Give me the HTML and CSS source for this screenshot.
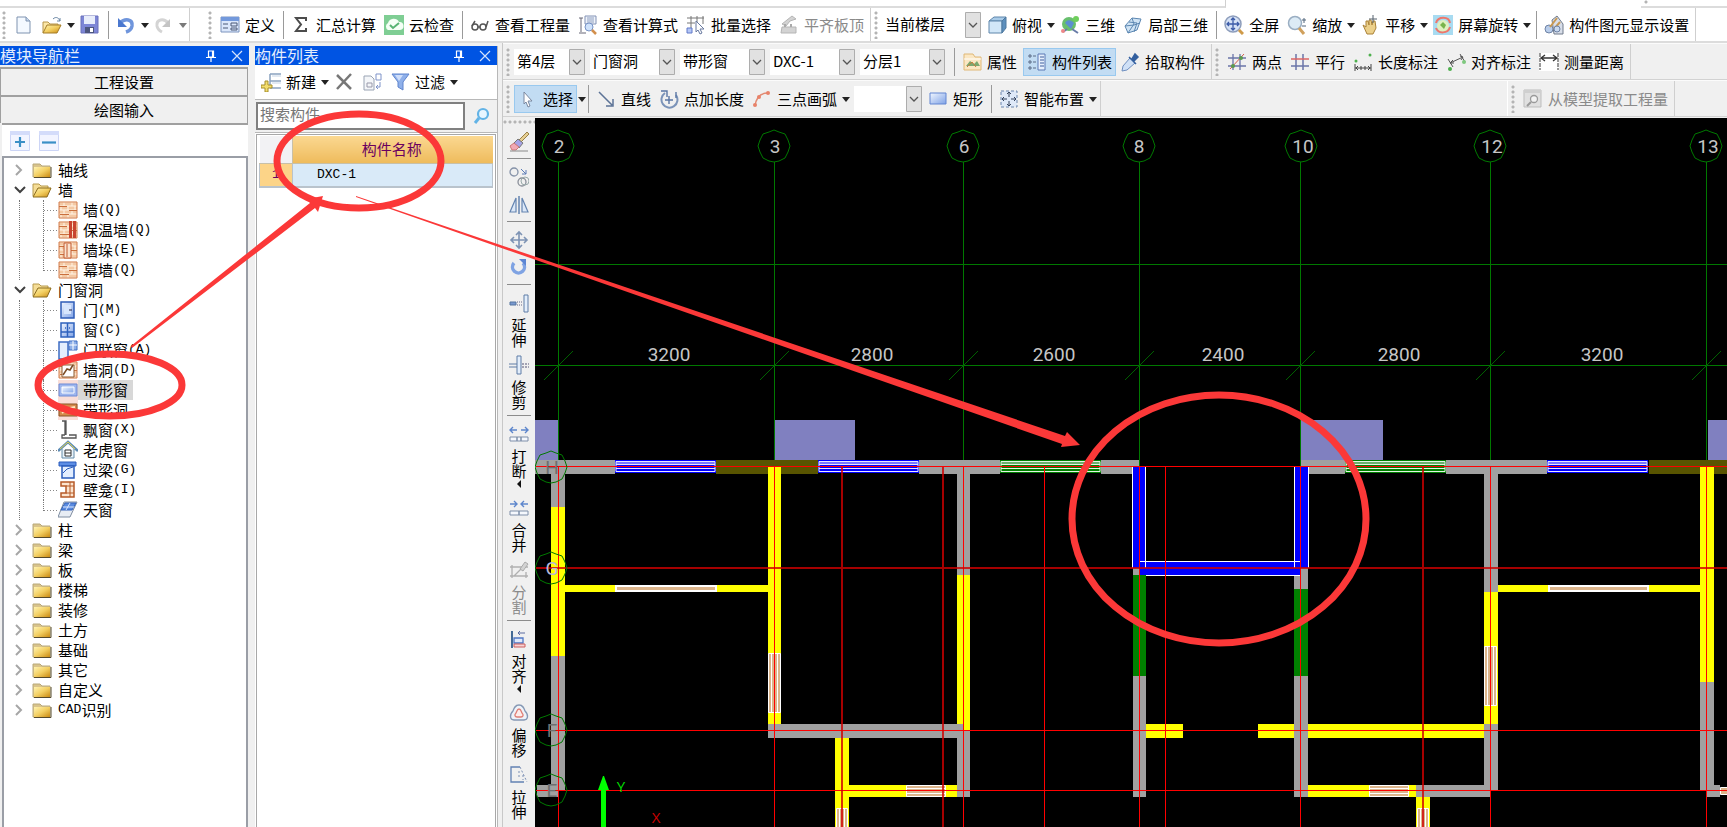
FILE: index.html
```html
<!DOCTYPE html>
<html lang="zh-CN">
<head>
<meta charset="utf-8">
<title>绘图输入</title>
<link rel="stylesheet" href="styles.css">
</head>
<body>
<svg class="sprite" aria-hidden="true">
  <defs>
    <linearGradient id="gold" x1="0" y1="0" x2="1" y2="1"><stop offset="0" stop-color="#fff3b0"/><stop offset=".5" stop-color="#f3cf62"/><stop offset="1" stop-color="#c98a12"/></linearGradient>
    <linearGradient id="sky" x1="0" y1="0" x2="1" y2="1"><stop offset="0" stop-color="#f2f7ff"/><stop offset="1" stop-color="#7fa2e6"/></linearGradient>
    <symbol id="folder" viewBox="0 0 20 20"><path d="M1 4h7l2 2h8v11H1z" fill="#d9c48c" stroke="#b9a97a"/><path d="M2 7h16v10H2z" fill="url(#gold)"/><path d="M2 17.500h17V7" fill="none" stroke="#554a2c"/></symbol>
    <symbol id="folder-open" viewBox="0 0 20 20"><path d="M1 16V4h6l2 2h7v4" fill="#f5dd96" stroke="#b79a4d"/><path d="M1 17l5-9h13l-4 9z" fill="url(#gold)" stroke="#8a6a1c"/></symbol>
    <symbol id="brick" viewBox="0 0 20 20"><path d="M1 2h18v16H1z" fill="#f4c9a4"/><path d="M1 2h18M1 6h18M1 10h18M1 14h18M1 18h18M6 2v4M14 2v4M3 6v4M10 6v4M17 6v4M6 10v4M14 10v4M3 14v4M10 14v4" stroke="#fff4e6"/><path d="M1 2h18v16H1z" fill="none" stroke="#d27d4c"/><path d="M1 6.500h8M11 10.500h8M2 14.500h9" stroke="#c96f3d"/></symbol>
    <symbol id="right" viewBox="0 0 10 12"><path d="M2 1l5 5-5 5" fill="none" stroke="#a6a6a6" stroke-width="2"/></symbol>
    <symbol id="down" viewBox="0 0 12 10"><path d="M1 2l5 5 5-5" fill="none" stroke="#404040" stroke-width="2"/></symbol>
    <symbol id="chev" viewBox="0 0 16 26"><path d="M.5.500h15v25H.5z" fill="#e1e1e1" stroke="#adadad"/><path d="M4 11l4 4 4-4" fill="none" stroke="#555" stroke-width="1.300"/></symbol>
    <symbol id="tri" viewBox="0 0 10 10"><path d="M1 3h8L5 8z" fill="#222"/></symbol>
    <symbol id="lefttri" viewBox="0 0 10 10"><path d="M7 1v8L3 5z" fill="#111"/></symbol>
    <symbol id="pin" viewBox="0 0 12 14"><path d="M3.500 2h5v6h-5zM1 8.500h10M6 9v4M7.500 2v6" fill="none" stroke="#fff" stroke-width="1.200"/></symbol>
    <symbol id="close" viewBox="0 0 12 12"><path d="M1 1l10 10M11 1L1 11" stroke="#d5e2fb" stroke-width="1.200"/></symbol>
  </defs>
</svg>

<div class="topstrip"><div class="strip-a"></div><div class="strip-b"><i class="grip"></i></div></div>

<header class="mainbar">
  <div class="toolbar">
    <i class="grip"></i>
    <button class="tool" aria-label="新建文件"><svg class="ic" viewBox="0 0 20 20"><path d="M3 2h9l4 4v12H3z" fill="#f4f9ff" stroke="#7f93b0"/><path d="M12 2v4h4" fill="#c7d7ec" stroke="#7f93b0"/></svg></button>
    <button class="tool" aria-label="打开"><svg class="ic" viewBox="0 0 20 20"><path d="M1 18V7h5l2 2h8v3" fill="#fbe7a8" stroke="#b79548"/><path d="M1 18l4-8h14l-4 8z" fill="url(#gold)" stroke="#a47d28"/><path d="M11 4c3-3 6-1 7 2m-3 0h3V3" fill="none" stroke="#6b87a5"/></svg></button>
    <button class="drop" aria-label="打开选项"><svg viewBox="0 0 10 10"><use href="#tri"/></svg></button>
    <button class="tool" aria-label="保存"><svg class="ic" viewBox="0 0 20 20"><path d="M1 1h17v17H1z" fill="#7d86d6" stroke="#6a70bb"/><path d="M4 1h11v8H4z" fill="#e8edfb"/><path d="M5 12h9v6H5z" fill="#4d567f"/><path d="M10 13h3v4h-3z" fill="#fff"/></svg></button>
    <i class="sep"></i>
    <button class="tool" aria-label="撤销"><svg class="ic" viewBox="0 0 20 20"><path d="M4 8c5-5 13-4 12 3-.5 3-3 5-6 6" fill="none" stroke="#6f95dc" stroke-width="3.500"/><path d="M2 3v9h9z" fill="#4b78cf"/></svg></button>
    <button class="drop" aria-label="撤销选项"><svg viewBox="0 0 10 10"><use href="#tri"/></svg></button>
    <button class="tool" aria-label="重做"><svg class="ic" viewBox="0 0 20 20"><path d="M14 8C10 3 2 4 3 11c.5 3 3 5 5 6" fill="none" stroke="#d4d4d4" stroke-width="3"/><path d="M16 4v8H8z" fill="#c4c4c4"/></svg></button>
    <button class="drop dim" aria-label="重做选项"><svg viewBox="0 0 10 10"><use href="#tri"/></svg></button>
  </div>
  <div class="toolbar spaced">
    <i class="grip"></i>
    <button class="tool"><svg class="ic" viewBox="0 0 20 20"><path d="M1 2h18v15H1z" fill="#dbe7fb" stroke="#7d94be"/><path d="M1 2h18v4H1z" fill="#7399dc"/><path d="M3 9h5M3 13h5M11 8h6v3h-6zM11 13h6v2h-6z" fill="none" stroke="#4a5876"/></svg>定义</button>
    <i class="sep"></i>
    <button class="tool"><svg class="ic" viewBox="0 0 20 20"><path d="M15 6V3H5l5 6.500L5 16h10v-3" fill="none" stroke="#4c4c4c" stroke-width="2"/></svg>汇总计算</button>
    <button class="tool"><svg class="ic" viewBox="0 0 20 20"><path d="M0 0h20v20H0z" fill="#7fce94"/><path d="M4 15a4 4 0 010-7 6 6 0 0111-1 4 4 0 011 8z" fill="#f4fff6"/><path d="M6 10l3 3 6-5" fill="none" stroke="#57b473" stroke-width="2"/></svg>云检查</button>
    <i class="sep"></i>
    <button class="tool"><svg class="ic" viewBox="0 0 20 20"><circle cx="5" cy="12" r="3" fill="none" stroke="#555" stroke-width="1.500"/><circle cx="13" cy="12" r="3" fill="none" stroke="#555" stroke-width="1.500"/><path d="M2 11l3-5M16 12l2-6M8 12h2" stroke="#555" stroke-width="1.500"/></svg>查看工程量</button>
    <button class="tool"><svg class="ic" viewBox="0 0 20 20"><path d="M7 1h11v8H7z" fill="#eef2fa" stroke="#8292b5"/><path d="M9 3h7M9 5h7M9 7h7" stroke="#8fa0c0"/><path d="M1 3h4M3 3v14M1 18h7" stroke="#667"/><circle cx="11" cy="12" r="4" fill="#cfe2fb" stroke="#7792c4"/><path d="M14 15l4 4" stroke="#d28f4c" stroke-width="2.500"/></svg>查看计算式</button>
    <button class="tool"><svg class="ic" viewBox="0 0 20 20"><path d="M1 3h17M1 8h8M5 1v12M11 1v7M17 1v8" stroke="#777"/><path d="M1 13h5v5H1z" fill="#b5c7f6" stroke="#6079c8"/><path d="M10 6l8 8h-4l2 4-2 1-2-4-2 2z" fill="#fff" stroke="#68799f"/></svg>批量选择</button>
    <button class="tool off"><svg class="ic" viewBox="0 0 20 20"><path d="M3 9L13 1l4 3-6 2-4 5zM3 12h14v6H2z" fill="#d3d3d3" stroke="#b5b5b5"/><path d="M6 12v-3M12 12V9" stroke="#aaa" stroke-width="2"/></svg>平齐板顶</button>
  </div>
  <div class="toolbar">
    <i class="grip"></i>
    <label class="combo c-wide"><select aria-label="楼层范围"><option>当前楼层</option></select><svg viewBox="0 0 16 26"><use href="#chev"/></svg></label>
    <button class="tool"><svg class="ic" viewBox="0 0 20 20"><path d="M2 6l5-4h12l-4 4z" fill="#a9cbe8" stroke="#5f86ab"/><path d="M2 6h13v12H2z" fill="#d2e7f8" stroke="#5f86ab"/><path d="M15 6l4-4v11l-4 5z" fill="#5d8fbd" stroke="#4e789f"/></svg>俯视</button>
    <button class="drop" aria-label="俯视选项"><svg viewBox="0 0 10 10"><use href="#tri"/></svg></button>
    <button class="tool"><svg class="ic" viewBox="0 0 20 20"><circle cx="9" cy="9" r="7" fill="#68bf6d"/><path d="M5 8c3-5 7-2 9 0l-3 6z" fill="#5b8fd0"/><path d="M3 17l4-3M12 14l6 4" stroke="#687ca8" stroke-width="2"/><circle cx="16" cy="4" r="3" fill="#6fcf5c"/><circle cx="3" cy="16" r="2" fill="#e88"/></svg>三维</button>
    <button class="tool"><svg class="ic" viewBox="0 0 20 20"><path d="M2 11L9 3l9 1-4 11-9 3z" fill="#cfe3f4" stroke="#5c87b2"/><path d="M6 7l8 1-3 9M9 3l2 6-6 9M2 11l9-1 6-2" fill="none" stroke="#5c87b2"/></svg>局部三维</button>
    <i class="sep"></i>
    <button class="tool"><svg class="ic" viewBox="0 0 20 20"><circle cx="9" cy="9" r="8" fill="#d6e2f6" stroke="#8d9dbb" stroke-width="1.500"/><path d="M9 3v12M3 9h12M7 5l2-2 2 2M7 13l2 2 2-2M5 7L3 9l2 2M13 7l2 2-2 2" fill="none" stroke="#3c5ba8" stroke-width="1.300"/><path d="M15 15l4 4" stroke="#cf9a48" stroke-width="3"/></svg>全屏</button>
    <button class="tool"><svg class="ic" viewBox="0 0 20 20"><circle cx="8" cy="8" r="6.500" fill="#dcebf6" stroke="#9aaec2" stroke-width="1.500"/><path d="M12 13l5 6" stroke="#d0a05c" stroke-width="3"/><path d="M17 3v5M15 5h4M15 11h4" stroke="#50657b"/></svg>缩放</button>
    <button class="drop" aria-label="缩放选项"><svg viewBox="0 0 10 10"><use href="#tri"/></svg></button>
    <button class="tool"><svg class="ic" viewBox="0 0 20 20"><path d="M3 10l3 2V6h2l1 4V5h2l1 5 1-4h2l1 7-3 6H7z" fill="#ecd08a" stroke="#aa8137"/><path d="M13 0v8M9 4h8" stroke="#55606c"/></svg>平移</button>
    <button class="drop" aria-label="平移选项"><svg viewBox="0 0 10 10"><use href="#tri"/></svg></button>
    <button class="tool"><svg class="ic" viewBox="0 0 20 20"><path d="M0 0h20v20H0z" fill="#a8dbf1"/><circle cx="10" cy="11" r="6" fill="#dff0c0"/><path d="M7 10l3-3 3 3-2 4z" fill="#78b44d"/><path d="M3 8c2-7 13-7 14 0M17 12c-2 7-12 7-14 1" fill="none" stroke="#ee776b" stroke-width="2"/></svg>屏幕旋转</button>
    <button class="drop" aria-label="旋转选项"><svg viewBox="0 0 10 10"><use href="#tri"/></svg></button>
    <i class="sep"></i>
    <button class="tool"><svg class="ic" viewBox="0 0 20 20"><path d="M8 5l5-4 6 8v10h-9z" fill="#d8dee9" stroke="#717b8b"/><circle cx="5" cy="14" r="4" fill="#b9cdea" stroke="#6d82a5"/><path d="M6 12l7-9M10 14l6-7" stroke="#c99952" stroke-width="2"/><circle cx="13" cy="14" r="3" fill="#c9d9ef" stroke="#6d82a5"/></svg>构件图元显示设置</button>
  </div>
</header>

<main class="work">
  <aside class="panel nav">
    <div class="title"><h2>模块导航栏</h2><button aria-label="固定"><svg width="12" height="14"><use href="#pin"/></svg></button><button aria-label="关闭"><svg width="12" height="12"><use href="#close"/></svg></button></div>
    <div class="sections"><button>工程设置</button><button>绘图输入</button></div>
    <div class="treebar">
      <button aria-label="展开"><svg viewBox="0 0 20 20"><path d="M.5.500h19v19H.5z" fill="#f2f4ff" stroke="#ccd5f6"/><path d="M0 0h20v4H0z" fill="#d4dcfa"/><path d="M10 6v10M5 11h10" stroke="#3a8fc6" stroke-width="2.200"/></svg></button>
      <button aria-label="折叠"><svg viewBox="0 0 20 20"><path d="M.5.500h19v19H.5z" fill="#f2f4ff" stroke="#ccd5f6"/><path d="M0 0h20v4H0z" fill="#d4dcfa"/><path d="M3 11.500h14" stroke="#3a8fc6" stroke-width="2.200"/></svg></button>
    </div>
    <ul class="tree">
      <li><div class="row"><svg class="tw"><use href="#right"/></svg><svg class="fo"><use href="#folder"/></svg>轴线</div></li>
      <li><div class="row"><svg class="tw open"><use href="#down"/></svg><svg class="fo"><use href="#folder-open"/></svg>墙</div>
        <ul class="kids">
          <li><svg class="ki"><use href="#brick"/></svg>墙<span class="lat">(Q)</span></li>
          <li><svg class="ki"><use href="#brick"/><path d="M11 1h3v17h-3zM15 1h3v17h-3z" fill="#c8452f"/></svg>保温墙<span class="lat">(Q)</span></li>
          <li><svg class="ki"><use href="#brick"/><path d="M6 3h7v15H6z" fill="#fbe3cf" stroke="#c25a30"/><path d="M9 4v13" stroke="#c25a30"/></svg>墙垛<span class="lat">(E)</span></li>
          <li><svg class="ki"><use href="#brick"/></svg>幕墙<span class="lat">(Q)</span></li>
        </ul></li>
      <li><div class="row"><svg class="tw open"><use href="#down"/></svg><svg class="fo"><use href="#folder-open"/></svg>门窗洞</div>
        <ul class="kids">
          <li><svg class="ki" viewBox="0 0 20 20"><path d="M3 2h13v16H3z" fill="url(#sky)" stroke="#2e5cb8" stroke-width="1.500"/><path d="M6 5h7v9H6z" fill="#d7e6fd"/><path d="M11 10h3" stroke="#224"/></svg>门<span class="lat">(M)</span></li>
          <li><svg class="ki" viewBox="0 0 20 20"><path d="M3 3h13v14H3z" fill="url(#sky)" stroke="#2e62bd" stroke-width="1.500"/><path d="M9.500 3v14M3 12h13M7 8h1M11 8h1" stroke="#2e62bd" stroke-width="1.500"/></svg>窗<span class="lat">(C)</span></li>
          <li><svg class="ki" viewBox="0 0 20 20"><path d="M1 2h9v17H1z" fill="#e4eefd" stroke="#3d6cc3" stroke-width="1.500"/><path d="M11 1h8v9h-8z" fill="#8fb0e8" stroke="#3d6cc3"/><path d="M15 1v9M11 5h8" stroke="#fff"/></svg>门联窗<span class="lat">(A)</span></li>
          <li><svg class="ki"><use href="#brick"/><path d="M4 5h12v12H4z" fill="#fff" stroke="#8b5a30"/><path d="M5 15l4-6 3 1 3-5" fill="none" stroke="#7b4d27" stroke-width="1.500"/></svg>墙洞<span class="lat">(D)</span></li>
          <li class="picked"><svg class="ki" viewBox="0 0 20 20"><path d="M0 0h20v20H0z" fill="#f9ded8"/><path d="M1 4h18v12H1z" fill="#9fb7ee" stroke="#6d8bd6"/><path d="M4 7h12v6H4z" fill="url(#sky)" stroke="#fff"/></svg><span>带形窗</span></li>
          <li><svg class="ki" viewBox="0 0 20 20"><path d="M0 0h20v20H0z" fill="#f9ded8"/><path d="M1 4h18v12H1z" fill="#d58a4b" stroke="#8b5527"/><path d="M4 13l8-5 5-1" fill="none" stroke="#ffe6bf" stroke-width="2"/></svg>带形洞</li>
          <li><svg class="ki" viewBox="0 0 20 20"><path d="M7 1H4M7 1v14M11 15h7v3H4v-3h3M4 1h4v14" fill="none" stroke="#555" stroke-width="1.300"/></svg>飘窗<span class="lat">(X)</span></li>
          <li><svg class="ki" viewBox="0 0 20 20"><path d="M4 9v9h12V9" fill="#eaf4fb" stroke="#648ba8"/><path d="M0 11L10 2l10 9" fill="none" stroke="#5d8cb5" stroke-width="2.500"/><path d="M2 9l8-7 7 7" fill="none" stroke="#e5d14a"/><path d="M7 10h6v6H7zM7 13h6" fill="#fff" stroke="#333"/></svg>老虎窗</li>
          <li><svg class="ki" viewBox="0 0 20 20"><path d="M1 2h17v4H1z" fill="#5c8de4" stroke="#2a5cbc"/><path d="M4 6h12v12H4z" fill="#e3eeff" stroke="#2a5cbc" stroke-width="1.500"/><path d="M5 13l4-4 6-2" fill="none" stroke="#2a5cbc"/></svg>过梁<span class="lat">(G)</span></li>
          <li><svg class="ki" viewBox="0 0 20 20"><path d="M3 2h13v15H3v-4h5V6H3z" fill="#fbe4cf" stroke="#b65a29" stroke-width="1.500"/><path d="M12 2v15M8 6h8M8 13h8" stroke="#b65a29"/></svg>壁龛<span class="lat">(I)</span></li>
          <li><svg class="ki" viewBox="0 0 20 20"><path d="M6 2h13l-7 15H0z" fill="#e8edf4" stroke="#7e8ca0"/><path d="M7 3h11l-4 7H3z" fill="#5a8be0" stroke="#3262bb"/><path d="M12 3L8 10M5 7h11" stroke="#dbe8ff"/></svg>天窗</li>
        </ul></li>
      <li><div class="row"><svg class="tw"><use href="#right"/></svg><svg class="fo"><use href="#folder"/></svg>柱</div></li>
      <li><div class="row"><svg class="tw"><use href="#right"/></svg><svg class="fo"><use href="#folder"/></svg>梁</div></li>
      <li><div class="row"><svg class="tw"><use href="#right"/></svg><svg class="fo"><use href="#folder"/></svg>板</div></li>
      <li><div class="row"><svg class="tw"><use href="#right"/></svg><svg class="fo"><use href="#folder"/></svg>楼梯</div></li>
      <li><div class="row"><svg class="tw"><use href="#right"/></svg><svg class="fo"><use href="#folder"/></svg>装修</div></li>
      <li><div class="row"><svg class="tw"><use href="#right"/></svg><svg class="fo"><use href="#folder"/></svg>土方</div></li>
      <li><div class="row"><svg class="tw"><use href="#right"/></svg><svg class="fo"><use href="#folder"/></svg>基础</div></li>
      <li><div class="row"><svg class="tw"><use href="#right"/></svg><svg class="fo"><use href="#folder"/></svg>其它</div></li>
      <li><div class="row"><svg class="tw"><use href="#right"/></svg><svg class="fo"><use href="#folder"/></svg>自定义</div></li>
      <li><div class="row"><svg class="tw"><use href="#right"/></svg><svg class="fo"><use href="#folder"/></svg><span class="lat">CAD</span>识别</div></li>
    </ul>
  </aside>

  <section class="panel parts">
    <div class="title"><h2>构件列表</h2><button aria-label="固定"><svg width="12" height="14"><use href="#pin"/></svg></button><button aria-label="关闭"><svg width="12" height="12"><use href="#close"/></svg></button></div>
    <div class="partbar">
      <button class="tool"><svg class="ic" viewBox="0 0 20 20"><path d="M9 2v14M9 2h11M9 9h11M9 16h11" stroke="#8ba2c0" stroke-width="1.500"/><path d="M11 4h9M11 11h9" stroke="#c5d4e6"/><path d="M4 9h3v4h4v3H7v4H4v-4H0v-3h4z" fill="#f3dd6c" stroke="#a48d2b"/></svg>新建</button>
      <button class="drop" aria-label="新建选项"><svg viewBox="0 0 10 10"><use href="#tri"/></svg></button>
      <button class="tool" aria-label="删除"><svg class="ic" viewBox="0 0 20 20"><path d="M3 3l14 14M17 2L3 17" stroke="#777" stroke-width="2.500"/></svg></button>
      <button class="tool" aria-label="复制"><svg class="ic" viewBox="0 0 20 20"><path d="M2 4h7l3 3v11H2z" fill="#f4f6f9" stroke="#9aa4b4"/><path d="M5 11h5v4H5z" fill="none" stroke="#99a"/><path d="M14 2h5v6h-5zM18 10v5h-4m2-2l-2 2 2 2" fill="none" stroke="#7f93c9"/></svg></button>
      <button class="tool"><svg class="ic" viewBox="0 0 20 20"><path d="M2 2h17l-6 8v8l-5-3v-5z" fill="#8fb0ea" stroke="#5f84cd"/><path d="M5 3h8l-4 6z" fill="#cfdefa"/></svg>过滤</button>
      <button class="drop" aria-label="过滤选项"><svg viewBox="0 0 10 10"><use href="#tri"/></svg></button>
    </div>
    <div class="search"><input type="text" placeholder="搜索构件" aria-label="搜索构件"><button aria-label="搜索"><svg viewBox="0 0 20 20"><circle cx="11" cy="8" r="5" fill="#e8f6ff" stroke="#62b3e6" stroke-width="2.200"/><path d="M7 12l-4 5" stroke="#62b3e6" stroke-width="3"/></svg></button></div>
    <div class="listbox">
      <table>
        <thead><tr><th class="gut"></th><th>构件名称</th></tr></thead>
        <tbody><tr><td class="num">1</td><td class="name">DXC-1</td></tr></tbody>
      </table>
    </div>
  </section>

  <section class="stage">
    <div class="barrow">
      <div class="toolbar">
        <i class="grip"></i>
        <label class="combo c1"><select aria-label="楼层"><option>第4层</option></select><svg viewBox="0 0 16 26"><use href="#chev"/></svg></label>
        <label class="combo c2"><select aria-label="构件类别"><option>门窗洞</option></select><svg viewBox="0 0 16 26"><use href="#chev"/></svg></label>
        <label class="combo c2"><select aria-label="构件类型"><option>带形窗</option></select><svg viewBox="0 0 16 26"><use href="#chev"/></svg></label>
        <label class="combo c2"><select aria-label="构件"><option>DXC-1</option></select><svg viewBox="0 0 16 26"><use href="#chev"/></svg></label>
        <label class="combo c2"><select aria-label="分层"><option>分层1</option></select><svg viewBox="0 0 16 26"><use href="#chev"/></svg></label>
        <i class="sep"></i>
        <button class="tool"><svg class="ic" viewBox="0 0 20 20"><path d="M2 2h9l2 3h6v13H2z" fill="#fbe7c3" stroke="#e0b877"/><path d="M2 7h17" stroke="#fff"/><path d="M4 14l4-5 4 3 3-3 3 5z" fill="#7ba96f"/><path d="M5 15l5-5 4 5" fill="none" stroke="#c67a3a"/></svg>属性</button>
        <button class="tool on"><svg class="ic" viewBox="0 0 20 20"><path d="M11 2h7v16h-7z" fill="#e6effc" stroke="#5a79b5"/><path d="M13 5h4M13 8h4M13 11h4M13 14h4" stroke="#3f5e9e"/><path d="M2 3h2v2H2zM2 9h2v2H2zM2 15h2v2H2zM6 4h3M6 10h3M6 16h3" fill="none" stroke="#5a6a86"/></svg>构件列表</button>
        <button class="tool"><svg class="ic" viewBox="0 0 20 20"><path d="M10 6l5 5-8 7-5 1 1-5z" fill="#cfe0f6" stroke="#6f8fc0"/><path d="M9 5l7 7M12 7l3-5 3 3-4 4z" fill="#34609f" stroke="#34609f" stroke-width="1.500"/></svg>拾取构件</button>
      </div>
      <div class="toolbar">
        <i class="grip"></i>
        <button class="tool"><svg class="ic" viewBox="0 0 20 20"><path d="M6 2v16M13 2v16M1 6h18M1 14h18" stroke="#6a74a8" stroke-width="1.300"/><path d="M3 17L17 2" stroke="#d35b4b"/><circle cx="14" cy="6" r="2" fill="#5a9a4e"/><circle cx="6" cy="14" r="2" fill="#5a9a4e"/></svg>两点</button>
        <button class="tool"><svg class="ic" viewBox="0 0 20 20"><path d="M6 2v16M13 2v16M1 14h18" stroke="#6a74a8" stroke-width="1.500"/><path d="M1 7h18" stroke="#d66" stroke-width="1.500"/></svg>平行</button>
        <button class="tool"><svg class="ic" viewBox="0 0 20 20"><path d="M2 12v7M18 12v7M2 16h16M5 14l-2 2 2 2M15 14l2 2-2 2M8 14v4M12 14v4" fill="none" stroke="#444"/><circle cx="3" cy="9" r="1.500" fill="#4db04d"/><circle cx="17" cy="3" r="1.500" fill="#4db04d"/></svg>长度标注</button>
        <button class="tool"><svg class="ic" viewBox="0 0 20 20"><path d="M2 7l5 8M14 2l5 8M4 11L17 5M7 8l-3 3h4M14 4l3 1-2 3" fill="none" stroke="#555"/><circle cx="4" cy="17" r="2" fill="#4db04d"/><circle cx="18" cy="10" r="2" fill="#7fc97f"/></svg>对齐标注</button>
        <button class="tool"><svg class="ic" viewBox="0 0 20 20"><path d="M0 1h20v18H0z" fill="#fff"/><path d="M1 1v17M19 1v17" stroke="#333" stroke-dasharray="4 1"/><path d="M2 6h16M6 3L2 6l4 3M14 3l4 3-4 3" fill="none" stroke="#333" stroke-width="1.300"/></svg>测量距离</button>
      </div>
    </div>
    <div class="barrow">
      <div class="toolbar">
        <i class="grip"></i>
        <button class="tool on pick"><svg class="ic" viewBox="0 0 20 20"><path d="M6 3l8 9H10l2 5-2 1-2-5-2 2z" fill="#fff" stroke="#7a88a0"/></svg>选择</button>
        <button class="drop" aria-label="选择选项"><svg viewBox="0 0 10 10"><use href="#tri"/></svg></button>
        <i class="sep tight"></i>
        <button class="tool"><svg class="ic" viewBox="0 0 20 20"><path d="M3 3l13 13M17 10v7h-7" fill="none" stroke="#5c7396" stroke-width="1.500"/></svg>直线</button>
        <button class="tool"><svg class="ic" viewBox="0 0 20 20"><path d="M6 4a8 8 0 1011 2" fill="none" stroke="#7b93b8" stroke-width="2"/><path d="M2 2h6v6M17 3v6M10 7v8M6 11h8" fill="none" stroke="#5a76a4" stroke-width="1.400"/></svg>点加长度</button>
        <button class="tool"><svg class="ic" viewBox="0 0 20 20"><path d="M3 17C4 9 8 4 16 4" fill="none" stroke="#e28a72" stroke-width="1.500"/><circle cx="16" cy="4" r="2" fill="#e8826a"/><circle cx="7" cy="8" r="2" fill="#e8826a"/><circle cx="3" cy="16" r="2" fill="#e8826a"/></svg>三点画弧</button>
        <button class="drop" aria-label="画弧选项"><svg viewBox="0 0 10 10"><use href="#tri"/></svg></button>
        <label class="combo c3"><select aria-label="画弧参数"><option></option></select><svg viewBox="0 0 16 26"><use href="#chev"/></svg></label>
        <button class="tool"><svg class="ic" viewBox="0 0 20 20"><path d="M2 4h16v11H2z" fill="url(#sky)" stroke="#6286d2"/></svg>矩形</button>
        <i class="sep"></i>
        <button class="tool"><svg class="ic" viewBox="0 0 20 20"><path d="M2 2h16v16H2z" fill="#dfe9f8" stroke="#6d86ad" stroke-dasharray="3 2"/><path d="M10 3v5M10 12v5M3 10h5M12 10h5M8 5l2-2 2 2M8 15l2 2 2-2M5 8l-2 2 2 2M15 8l2 2-2 2" fill="none" stroke="#35435c"/></svg>智能布置</button>
        <button class="drop" aria-label="智能布置选项"><svg viewBox="0 0 10 10"><use href="#tri"/></svg></button>
      </div>
      <div class="toolbar far">
        <i class="grip"></i>
        <button class="tool off"><svg class="ic" viewBox="0 0 20 20"><path d="M1 1h17v17H1z" fill="#e0e0e0" stroke="#bdbdbd"/><path d="M1 1h17v3H1z" fill="#cfcfcf"/><circle cx="11" cy="10" r="3.500" fill="#f2f2f2" stroke="#999" stroke-width="1.300"/><path d="M8 13l-4 4" stroke="#999" stroke-width="2"/></svg>从模型提取工程量</button>
      </div>
    </div>
    <div class="draw">
      <nav class="side" aria-label="修改">
        <i class="hgrip"></i>
        <button class="vt" aria-label="删除"><svg class="ic" viewBox="0 0 20 20"><path d="M10 8l8-8 2 2-8 8z" fill="#e6cf92" stroke="#998048"/><path d="M5 11l4-4 5 4-4 5z" fill="#a6a3e8" stroke="#777"/><path d="M1 14l4-3 5 4-3 3H3z" fill="#f2a9b5" stroke="#c77"/><path d="M1 19h18" stroke="#888"/></svg></button>
        <i class="hsep"></i>
        <button class="vt" aria-label="复制"><svg class="ic" viewBox="0 0 20 20"><circle cx="5" cy="5" r="4" fill="none" stroke="#8592a8" stroke-width="1.300"/><circle cx="13" cy="15" r="4" fill="none" stroke="#8a8f99" stroke-width="1.300"/><circle cx="16" cy="14" r="4" fill="none" stroke="#9aa"/><path d="M12 2l5 5M17 3v4h-4" fill="none" stroke="#5a7bb5"/></svg></button>
        <button class="vt" aria-label="镜像"><svg class="ic" viewBox="0 0 20 20"><path d="M7 3v14H1zM13 3v14h6z" fill="#dce8f8" stroke="#6484b0" stroke-width="1.200"/><path d="M10 1v18" stroke="#6484b0" stroke-width="1.500"/></svg></button>
        <i class="hsep"></i>
        <button class="vt" aria-label="移动"><svg class="ic" viewBox="0 0 20 20"><path d="M10 2v16M2 10h16M7 5l3-3 3 3M7 15l3 3 3-3M5 7l-3 3 3 3M15 7l3 3-3 3" fill="none" stroke="#7d93b4" stroke-width="1.600"/></svg></button>
        <button class="vt" aria-label="旋转"><svg class="ic" viewBox="0 0 20 20"><path d="M5 5a6 6 0 109 0" fill="none" stroke="#7fa3e3" stroke-width="3.500"/><path d="M10 1h7v7z" fill="#5c86d4"/></svg></button>
        <i class="hsep"></i>
        <button class="vt"><svg class="ic" viewBox="0 0 20 20"><path d="M1 9h6v3H1z" fill="#7898cf" stroke="#55749f"/><path d="M8 9h5M8 12h5" stroke="#668" stroke-dasharray="1 1"/><path d="M15 2h4v17h-4z" fill="#e3eefb" stroke="#5e7ca6"/></svg><span>延伸</span></button>
        <button class="vt"><svg class="ic" viewBox="0 0 20 20"><path d="M8 1h4v18H8z" fill="#e3eefb" stroke="#5e7ca6"/><path d="M0 9h8M0 12h8" stroke="#5e7ca6"/><path d="M13 9h7M13 12h7" stroke="#557" stroke-dasharray="2 1"/></svg><span>修剪</span></button>
        <i class="hsep"></i>
        <button class="vt"><svg class="ic" viewBox="0 0 20 20"><path d="M1 6h7M12 6h7M4 3L1 6l3 3M16 3l3 3-3 3" fill="none" stroke="#5d86cc" stroke-width="1.400"/><path d="M1 13h7v4H1zM12 13h7v4h-7zM8 13h4v4H8z" fill="#f5f8fd" stroke="#7f8fa9"/></svg><span>打断</span><svg class="fly" viewBox="0 0 10 10"><use href="#lefttri"/></svg></button>
        <button class="vt"><svg class="ic" viewBox="0 0 20 20"><path d="M1 6h7M12 6h7M5 3l3 3-3 3M15 3l-3 3 3 3" fill="none" stroke="#5d86cc" stroke-width="1.400"/><path d="M1 13h9v4H1zM10 13h9v4h-9z" fill="#f5f8fd" stroke="#7f8fa9"/></svg><span>合并</span></button>
        <button class="vt off"><svg class="ic" viewBox="0 0 20 20"><path d="M1 7h18M1 16h18M3 5v13M17 12v6M5 16l9-9" fill="none" stroke="#b0b0b0" stroke-width="1.300"/><path d="M11 9l5-7 3 2-5 7z" fill="#d2d2d2" stroke="#aaa"/></svg><span>分割</span></button>
        <i class="hsep"></i>
        <button class="vt"><svg class="ic" viewBox="0 0 20 20"><path d="M3 2v17" stroke="#446a96" stroke-width="2"/><path d="M5 9h9v5H5z" fill="#dfe9fb" stroke="#5077c4" stroke-width="1.300"/><path d="M5 15h11v3H5z" fill="#f8d3d3" stroke="#cc5f5f"/><path d="M9 4h7M11 2L9 4l2 2" fill="none" stroke="#5a6b9f"/></svg><span>对齐</span><svg class="fly" viewBox="0 0 10 10"><use href="#lefttri"/></svg></button>
        <button class="vt"><svg class="ic" viewBox="0 0 20 20"><path d="M10 2c4 0 5 3 6 6 4 4 3 9-1 9H5c-4 0-5-5-1-9 1-3 2-6 6-6z" fill="#eef3f9" stroke="#8598b4" stroke-width="1.300"/><path d="M10 6c2 0 2 2 3 4 2 2 1 4-1 4H8c-2 0-3-2-1-4 1-2 1-4 3-4z" fill="#fdecea" stroke="#e07f75" stroke-width="1.300"/></svg><span>偏移</span></button>
        <button class="vt"><svg class="ic" viewBox="0 0 20 20"><path d="M11 2H2v15h13" fill="none" stroke="#6181b3" stroke-width="1.300"/><path d="M11 2l7 15M10 6v8M14 10v5" fill="none" stroke="#7b8fb4" stroke-dasharray="2 2"/></svg><span>拉伸</span></button>
      </nav>
      <svg class="plan" viewBox="535 118 1192 709" preserveAspectRatio="xMinYMin slice" role="img" aria-label="第4层平面图">
        <defs>
          <path id="bub" d="M0-16L5-14 11-12 14-6 16 0 14 6 11 12 5 15 0 16-5 15-11 12-14 6-16 0-14-6-11-12-5-14z"/>
          <g id="winb"><path d="M0 0h101v13H0z" fill="#00f"/><path d="M1 2h99v3H1z" fill="#7a7aff"/><path d="M1 1.500h99v10H1zM1 4.500h99M1 8.500h99" fill="none" stroke="#e8e8ff"/></g>
          <g id="wing"><path d="M0 0h101v13H0z" fill="#008000"/><path d="M1 2h99v3H1z" fill="#6cb06c"/><path d="M1 1.500h99v10H1zM1 4.500h99M1 8.500h99" fill="none" stroke="#e4f4e4"/></g>
        </defs>
        <g fill="#8080c0"><path d="M535 420h23v40h-23zM775 420h80v40h-80zM1301 420h82v40h-82zM1708 420h19v40h-19z"/></g>
        <g stroke="#007800" fill="none">
          <path d="M535 264.500h1192M535 365.500h1192M558.500 162v304M774.500 162v304M963.500 162v304M1139.500 162v304M1300.500 162v304M1490.500 162v304M1706.500 162v304"/>
          <path stroke="#006000" d="M544 380l29-29M760 380l29-29M949 380l29-29M1125 380l29-29M1286 380l29-29M1476 380l29-29M1692 380l29-29"/>
          <use href="#bub" x="558" y="146"/><use href="#bub" x="774" y="146"/><use href="#bub" x="963" y="146"/><use href="#bub" x="1139" y="146"/><use href="#bub" x="1301" y="146"/><use href="#bub" x="1490" y="146"/><use href="#bub" x="1706" y="146"/>
        </g>
        <g class="dim">
          <text x="559" y="153">2</text><text x="775" y="153">3</text><text x="964" y="153">6</text><text x="1139" y="153">8</text><text x="1303" y="153">10</text><text x="1492" y="153">12</text><text x="1708" y="153">13</text>
          <text x="669" y="361">3200</text><text x="872" y="361">2800</text><text x="1054" y="361">2600</text><text x="1223" y="361">2400</text><text x="1399" y="361">2800</text><text x="1602" y="361">3200</text>
        </g>
        <path fill="#a0a0a0" d="M535 460h80v14h-80zM919 460h81v14h-81zM1101 460h38v14h-38zM1301 460h44v14h-44zM1446 460h101v14h-101zM551 473h14v34h-14zM551 656h14v134h-14zM537 785h21v12h-21zM957 467h13v108h-13zM768 724h195v14H768zM957 730h13v67h-13zM1133 568h13v229h-13zM1294 568h14v229h-14zM1484 473h14v119h-14zM1484 724h14v66h-14zM1416 785h75v12h-75zM1700 682h14v108h-14zM1707 785h13v12h-13z"/>
        <path fill="#585400" d="M716 460h102v14H716zM1649 460h78v14h-78z"/>
        <path fill="#ff0" d="M551 507h14v149h-14zM565 585h203v7H565zM768 467h13v257h-13zM957 575h13v149h-13zM963 724h7v6h-7zM835 738h14v89h-14zM849 785h108v12H849zM1146 724h37v14h-37zM1258 724h36v14h-36zM1308 724h176v14h-176zM1308 785h108v12h-108zM1416 797h14v30h-14zM1484 592h14v132h-14zM1498 585h202v7h-202zM1700 467h14v215h-14z"/>
        <path fill="#008000" d="M1133 575h13v101h-13zM1294 589h14v87h-14z"/>
        <use href="#winb" x="615" y="460"/><use href="#winb" x="818" y="460"/><use href="#wing" x="1000" y="460"/><use href="#wing" x="1345" y="460"/><use href="#winb" x="1547" y="460"/>
        <g fill="#dcb48a" stroke="#fff" stroke-width="2"><path d="M616 586h100v5H616zM1549 586h99v5h-99z"/></g>
        <g fill="#dcb48a" stroke="#fff"><path d="M768.500 653.500h12v59h-12zM771.500 653.500v59M777.500 653.500v59M1484.500 646.500h12v59h-12zM1487.500 646.500v59M1493.500 646.500v59M906.500 785.500h39v11h-39zM906.500 788.500h39M906.500 793.500h39M1369.500 785.500h39v11h-39zM1369.500 788.500h39M1369.500 793.500h39M836.500 808.500h11v20h-11zM839.500 808.500v20M844.500 808.500v20M1417.500 808.500h11v20h-11zM1420.500 808.500v20M1425.500 808.500v20M1720.500 787.500h9v7h-9z"/></g>
        <path fill="#00f" d="M1132 467h14v101h-14zM1294 467h14v101h-14zM1139 561h162v14h-162z"/>
        <path fill="none" stroke="#fff" d="M1132.500 467v101M1145.500 467v101M1294.500 467v101M1308.500 467v101M1139 561.500h162M1146 575.500h155"/>
        <path stroke="#f00" d="M536 466.500h1191M536 730.500h1191M536 790.500h1191M558.500 467v360M774.500 467v360M963.500 467v360M1044.500 467v360M1139.500 467v360M1165.500 467v360M1300.500 467v360M1490.500 467v360M1706.500 467v360"/>
        <path stroke="#d00000" stroke-opacity=".8" stroke-width="2" d="M536 568h1191M842 467v360M943 467v360M1423 467v360"/>
        <g stroke="#007800" fill="none"><use href="#bub" x="551" y="467"/><use href="#bub" x="551" y="568"/><use href="#bub" x="551" y="730"/><use href="#bub" x="551" y="790"/></g>
        <g class="rowlab"><text x="552" y="474">H</text><text class="lite" x="552" y="575">G</text><text x="552" y="737">F</text><text x="552" y="797">E</text></g>
        <path fill="#0f0" d="M601 827v-37h-3l5-14h1l5 14h-3v37z"/>
        <text class="ax-y" x="621" y="792">Y</text><text class="ax-x" x="656" y="823">X</text>
      </svg>
    </div>
  </section>
</main>

<svg class="marks" width="1727" height="827" aria-hidden="true">
  <g fill="none" stroke="#fb3838" stroke-width="7"><ellipse cx="359" cy="161" rx="82" ry="47"/><ellipse cx="110" cy="385" rx="72" ry="31"/><ellipse cx="1219" cy="519" rx="147" ry="124"/></g>
  <path fill="#fb3838" d="M131 346L310 203 307 199 323 196 318 212 315 208 132 348zM356 196L1065 436 1067 432 1080 445 1061 447 1062 444 356 197z"/>
</svg>
</body>
</html>
```
FILE: styles.css
```css
* { box-sizing: border-box; }
body {
  margin: 0;
  height: 100vh;
  display: flex;
  flex-direction: column;
  overflow: hidden;
  background: #f0f0f0;
  color: #000;
  font: 15px/20px "Noto Sans CJK SC", sans-serif;
}
button, select, input { font: inherit; color: inherit; }
button { border: 0; padding: 0; background: none; }
ul { list-style: none; margin: 0; padding: 0; }
.sprite { position: absolute; width: 0; height: 0; }

/* top strip and toolbars */
.topstrip { display: flex; justify-content: space-between; flex: none; height: 8px; background: #fff; }
.strip-a { width: 71%; border-right: 1px solid #d0d0d0; border-bottom: 2px solid #dcdcdc; }
.strip-b { width: 5%; border-bottom: 2px solid #dcdcdc; padding-left: 3px; }
.strip-b .grip { height: 4px; display: block; }
.mainbar { display: flex; flex: none; height: 35px; background: #fff; border-bottom: 2px solid #dcdcdc; }
.toolbar { display: flex; align-items: center; flex: none; padding: 0 2px 0 3px; border-right: 1px solid #cfcfcf; }
.mainbar .toolbar:first-child { padding: 0 1px 0 2px; }
.spaced { margin-left: 15px; }
.grip {
  flex: none;
  width: 4px;
  height: 28px;
  margin-right: 4px;
  background: radial-gradient(circle at 2px 2px, #b4b4b4 1px, transparent 2px) 0 0 / 4px 5px;
}
.tool { display: flex; align-items: center; gap: 5px; flex: none; height: 28px; padding: 0 4px; white-space: nowrap; }
.ic { flex: none; width: 20px; height: 20px; }
.tool.off, .vt.off { color: #8a8a8a; }
.tool.on { background: #c2dcf3; box-shadow: inset 0 0 0 1px #99c9ef; margin-left: 2px; }
.tool.pick { margin-left: 0; }
.drop { display: flex; align-items: center; flex: none; width: 10px; height: 28px; }
.drop svg { width: 10px; height: 10px; }
.drop.dim { opacity: .6; }
.sep { flex: none; width: 1px; height: 28px; margin: 0 3px 0 4px; background: #9a9a9a; }
.sep.tight { margin-left: 1px; }
.combo { display: grid; grid-template-columns: 1fr 16px; flex: none; height: 26px; margin-right: 5px; background: #fff; }
.combo select { grid-area: 1 / 1 / 2 / 3; appearance: none; border: 0; border-radius: 0; background: none; padding: 0 0 2px 3px; }
.combo svg { grid-area: 1 / 2; width: 16px; height: 26px; pointer-events: none; }
.c-wide { width: 99px; margin-right: 2px; }
.c1 { width: 71px; }
.c2 { width: 85px; }
.c3 { width: 68px; margin: 0 2px 0 3px; }

/* work area */
.work { display: flex; flex: 1; min-height: 0; }
.panel { display: flex; flex-direction: column; flex: none; margin-top: 3px; }
.title { display: flex; align-items: center; gap: 14px; flex: none; height: 19px; padding-right: 6px; background: #0054e3; color: #e4edfc; }
.title h2 { flex: 1; margin: 0; font-size: 16px; font-weight: 400; line-height: 19px; }
.title button { display: flex; align-items: center; }
.title svg { display: block; }
.nav { width: 249px; }
.sections { display: flex; flex-direction: column; flex: none; margin: 2px 1px 0 0; }
.sections button { height: 28px; border: 1px solid #a0a0a0; border-top-width: 2px; border-bottom: 0; background: #f0f0f0; }
.treebar { display: flex; align-items: center; gap: 9px; flex: none; height: 33px; margin: 0 1px 0 2px; padding-left: 8px; background: #fff; border-top: 2px solid #a0a0a0; }
.treebar button, .treebar svg { display: block; width: 20px; height: 20px; }
.tree { flex: 1; min-height: 0; margin: 0 1px 0 2px; padding-top: 2px; background: #fff; border: 2px solid #9a9ea6; border-bottom: 0; }
.row, .kids li { display: flex; align-items: center; height: 20px; }
.row { padding-left: 10px; }
.tw { width: 10px; height: 12px; }
.tw.open { width: 12px; height: 10px; }
.tw.open + .fo { margin-left: 6px; }
.fo { width: 20px; height: 20px; margin: 0 6px 0 8px; }
.kids { margin-left: 15px; border-left: 1px dotted #777; }
.kids li { padding-left: 23px; }
.kids li::before {
  content: "";
  align-self: stretch;
  width: 14px;
  border-left: 1px dotted #777;
  background: repeating-linear-gradient(90deg, #888 0 1px, transparent 1px 3px) 0 10px / 100% 1px no-repeat;
}
.kids li:last-child::before { align-self: flex-start; height: 11px; }
.ki { width: 20px; height: 20px; margin-right: 5px; }
.picked .ki { background: #d8d8d8; }
.picked span { padding-right: 5px; background: #d8d8d8; box-shadow: -5px 0 #d8d8d8; }
.lat { font: 13px/20px "Liberation Mono", monospace; }

/* component list */
.parts { width: 243px; margin-left: 6px; background: #fff; border-right: 1px solid #b8b8b8; }
.partbar { display: flex; align-items: center; flex: none; height: 34px; padding-left: 2px; }
.search { display: flex; flex: none; height: 34px; padding: 2px 1px 2px 1px; gap: 3px; background: #f0f0f0; border: solid #b8b8b8; border-width: 1px 0; }
.search input { flex: 1; min-width: 0; border: 2px solid #808080; padding: 0 2px 4px; background: #fff; outline: 0; }
.search input::placeholder { color: #777; opacity: 1; }
.search button { width: 28px; display: grid; place-items: center; }
.search svg { width: 20px; height: 20px; }
.listbox { flex: 1; margin: 1px 1px 0; padding: 1px 2px; border: solid #a8a8a8; border-width: 1px; border-bottom: 0; }
.listbox table { width: 100%; border-collapse: collapse; table-layout: fixed; }
.listbox th { height: 27px; padding: 0; font-weight: 400; color: #6a0060; background: linear-gradient(#fbd891, #eebb5c); border: 1px solid #c8c0a8; border-width: 0 0 1px 1px; padding-right: 2px; }
.listbox .gut { width: 33px; background: #f2f2f4; border-left: 0; }
.listbox td { height: 24px; padding: 0; border: solid #b9c3cc; border-width: 0 1px 2px 1px; }
.num { text-align: center; color: #6a0060; background: #fcd488; }
.name { background: #d9eaf8; }
.listbox .name { padding-left: 24px; }
.listbox td { font: 13px/20px "Liberation Mono", monospace; }

/* drawing area */
.stage { display: flex; flex-direction: column; flex: 1; min-width: 0; margin-left: 4px; border-left: 1px solid #c8c8c8; }
.barrow { display: flex; flex: none; height: 37px; border-bottom: 1px solid #d2d2d2; border-top: 1px solid #fbfbfb; }
.far { margin-left: auto; margin-right: 52px; border-left: 1px solid #fff; }
.draw { display: flex; flex: 1; min-height: 0; margin-top: 1px; }
.side { display: flex; flex-direction: column; align-items: center; flex: none; width: 32px; overflow: hidden; }
.hgrip { flex: none; width: 32px; height: 4px; margin: 2px 0 4px; background: radial-gradient(circle at 2px 2px, #b4b4b4 1px, transparent 2px) 0 0 / 5px 4px; }
.hsep { flex: none; width: 24px; height: 1px; margin: 2px 0 4px; background: #8c8c8c; }
.vt { display: flex; flex-direction: column; align-items: center; flex: none; padding: 4px 0; }
.vt span { width: 15px; margin-top: 4px; line-height: 15px; }
.fly { width: 10px; height: 12px; }
.plan { flex: 1; min-width: 0; width: 100%; height: 100%; background: #000; }
.dim text { font: 19px Roboto, sans-serif; text-anchor: middle; fill: #c6c6c6; }
.rowlab text { font: 19px Roboto, sans-serif; text-anchor: middle; fill: #6e6e6e; }
.rowlab .lite { fill: #b8b8d8; }
.ax-y { font: 15px "Open Sans", sans-serif; text-anchor: middle; fill: #0d0; }
.ax-x { font: 15px "Open Sans", sans-serif; text-anchor: middle; fill: #c00; }

/* annotation overlay */
.marks { position: absolute; left: 0; top: 0; pointer-events: none; }
```
